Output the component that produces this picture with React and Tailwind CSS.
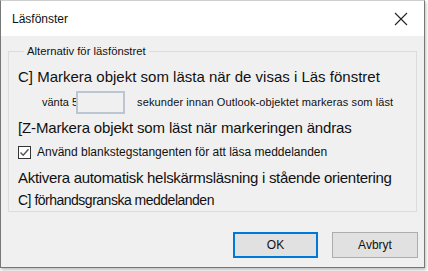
import React from "react";

const font = { fontFamily: '"Liberation Sans", Arial, sans-serif' };

const Check = () => (
  <svg width="11" height="11" viewBox="0 0 11 11" fill="none">
    <path d="M1.5 5.5 L4.2 8.2 L9.5 2.2" stroke="#555" strokeWidth="1.4" />
  </svg>
);

export default function App() {
  return (
    <div className="w-[428px] h-[271px] bg-white" style={font}>
      <div className="w-[425px] h-[268px] border border-t-[#cfcfcf] border-[#777] bg-[#f0f0f0] flex flex-col shadow-[1px_2px_3px_rgba(0,0,0,0.25)]">
        {/* Titelrad */}
        <div className="h-[35px] bg-white flex items-center justify-between pl-[11px] pr-[16px] shrink-0">
          <span className="text-[12px] text-[#111]">Läsfönster</span>
          <svg width="14" height="14" viewBox="0 0 14 14">
            <path d="M1 1 L13 13 M13 1 L1 13" stroke="#222" strokeWidth="1.1" />
          </svg>
        </div>

        <div className="px-[7px] pt-[9px]">
          <fieldset className="border border-[#dcdcdc] h-[167px] pl-[9px] pr-2 whitespace-nowrap">
            <legend className="ml-[6px] px-[3px] text-[11.3px] leading-[13px] text-[#111]">
              Alternativ för läsfönstret
            </legend>

            <div className="mt-[10px] text-[15px] leading-[18px] text-[#111]">
              C] Markera objekt som lästa när de visas i Läs fönstret
            </div>

            <div className="mt-[5px] flex items-center text-[11px] text-[#111]">
              <span className="ml-[24px]">vänta 5</span>
              <div className="w-[49px] h-[23px] border-2 border-[#bcc6d2] bg-[#f0f0f0] -ml-[2px]" />
              <span className="ml-[12px] tracking-[0.1px]">sekunder innan Outlook-objektet markeras som läst</span>
            </div>

            <div className="mt-[5px] text-[15px] leading-[18px] tracking-[-0.15px] text-[#111]">
              [Z-Markera objekt som läst när markeringen ändras
            </div>

            <label className="mt-[6px] flex items-center gap-[6px] text-[12px] text-[#111]">
              <span className="w-[13px] h-[13px] border border-[#333] bg-white flex items-center justify-center">
                <Check />
              </span>
              Använd blankstegstangenten för att läsa meddelanden
            </label>

            <div className="mt-[8px] text-[15px] leading-[18px] tracking-[-0.3px] text-[#111]">
              Aktivera automatisk helskärmsläsning i stående orientering
            </div>

            <div className="mt-[4px] text-[14px] leading-[18px] tracking-[-0.5px] text-[#111]">
              C] förhandsgranska meddelanden
            </div>
          </fieldset>
        </div>

        <div className="flex justify-end gap-[14px] pr-[6px] pt-[20px]">
          <button className="w-[85px] h-[26px] border-2 border-[#0078d7] bg-[#e1e1e1] text-[12px] text-[#111]">
            OK
          </button>
          <button className="w-[86px] h-[26px] border border-[#adadad] bg-[#e1e1e1] text-[12px] text-[#111]">
            Avbryt
          </button>
        </div>
      </div>
    </div>
  );
}
